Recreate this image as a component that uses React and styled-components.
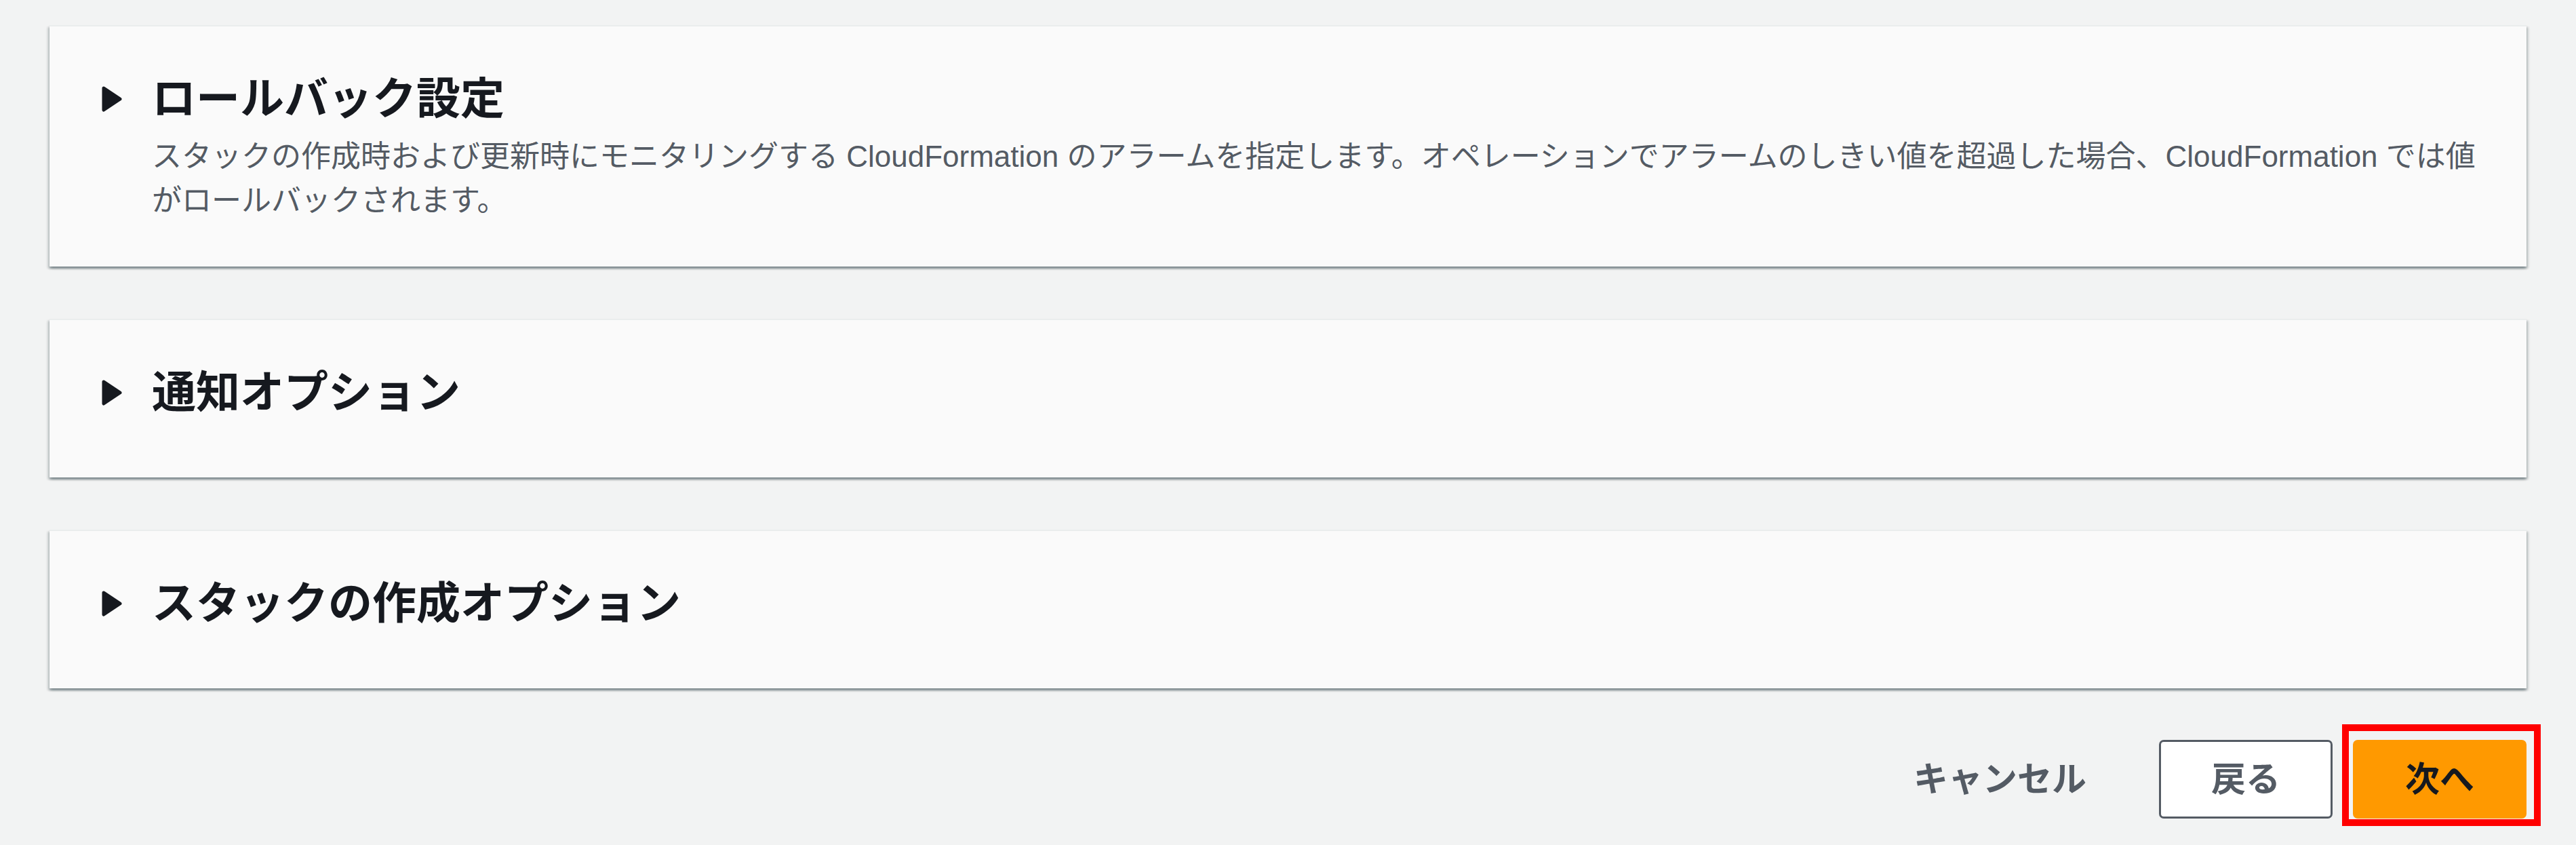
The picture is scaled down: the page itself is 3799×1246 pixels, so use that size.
import React from "react";
import styled, { createGlobalStyle } from "styled-components";

const GlobalStyle = createGlobalStyle`
  html, body {
    margin: 0;
    padding: 0;
    background: #f2f3f3;
  }
  body {
    font-family: "Liberation Sans", "Noto Sans CJK JP", sans-serif;
    -webkit-font-smoothing: antialiased;
  }
  #root {
    min-height: 1246px;
  }
`;

const Page = styled.div`
  display: flex;
  flex-direction: column;
  gap: 77px;
  padding: 37px 73px 40px;
  box-sizing: border-box;
`;

const Card = styled.section`
  display: grid;
  grid-template-columns: 30px 1fr;
  column-gap: 44px;
  align-items: center;
  background: #fafafa;
  border-top: 2px solid #eaeded;
  box-shadow: 0 3px 3px 0 rgba(0, 28, 36, 0.3),
    3px 3px 3px 0 rgba(0, 28, 36, 0.15),
    -3px 3px 3px 0 rgba(0, 28, 36, 0.15);
  padding: 69px 37px ${(p) => p.$pb}px 77px;
`;

const Caret = styled.svg`
  display: block;
  width: 30px;
  height: 38px;
  grid-column: 1;
  grid-row: 1;
  align-self: center;
`;

const Title = styled.h2`
  grid-column: 2;
  grid-row: 1;
  margin: 0;
  font-size: 65px;
  line-height: 76px;
  font-weight: 700;
  color: #16191f;
`;

const Description = styled.p`
  grid-column: 2;
  grid-row: 2;
  margin: 14px 0 0;
  font-size: 44px;
  line-height: 65px;
  font-weight: 400;
  color: #545b64;
`;

const Actions = styled.div`
  display: flex;
  justify-content: flex-end;
  align-items: center;
  gap: 30px;
  margin-top: -1px;
`;

const variants = {
  link: { bg: "transparent", border: "transparent", color: "#545b64" },
  normal: { bg: "#ffffff", border: "#545b64", color: "#545b64" },
  primary: { bg: "#ff9900", border: "#ff9900", color: "#16191f" },
};

const Button = styled.button`
  display: flex;
  align-items: center;
  justify-content: center;
  box-sizing: border-box;
  height: 116px;
  padding: 0 74px;
  border: 3px solid ${(p) => variants[p.$variant].border};
  border-radius: 7px;
  background: ${(p) => variants[p.$variant].bg};
  color: ${(p) => variants[p.$variant].color};
  font-family: "Liberation Sans", "Noto Sans CJK JP", sans-serif;
  font-size: 51px;
  font-weight: 700;
  line-height: 1;
  cursor: pointer;
`;

const Highlighted = styled.div`
  position: relative;
  display: flex;
`;

const HighlightFrame = styled.div`
  position: absolute;
  top: -23px;
  left: -16px;
  right: -21px;
  bottom: -11px;
  border: 10px solid #ff0000;
  pointer-events: none;
`;

const CaretIcon = () => (
  <Caret viewBox="0 0 30 38" aria-hidden="true">
    <polygon
      points="3,3 27,19 3,35"
      fill="#16191f"
      stroke="#16191f"
      strokeWidth="5"
      strokeLinejoin="round"
    />
  </Caret>
);

const sections = [
  {
    title: "ロールバック設定",
    description:
      "スタックの作成時および更新時にモニタリングする CloudFormation のアラームを指定します。オペレーションでアラームのしきい値を超過した場合、CloudFormation では値がロールバックされます。",
  },
  { title: "通知オプション" },
  { title: "スタックの作成オプション" },
];

export default function App() {
  return (
    <>
      <GlobalStyle />
      <Page>
        {sections.map((s) => (
          <Card key={s.title} $pb={s.description ? 65 : 87}>
            <CaretIcon />
            <Title>{s.title}</Title>
            {s.description && <Description>{s.description}</Description>}
          </Card>
        ))}
        <Actions>
          <Button $variant="link">キャンセル</Button>
          <Button $variant="normal">戻る</Button>
          <Highlighted>
            <Button $variant="primary">次へ</Button>
            <HighlightFrame />
          </Highlighted>
        </Actions>
      </Page>
    </>
  );
}
